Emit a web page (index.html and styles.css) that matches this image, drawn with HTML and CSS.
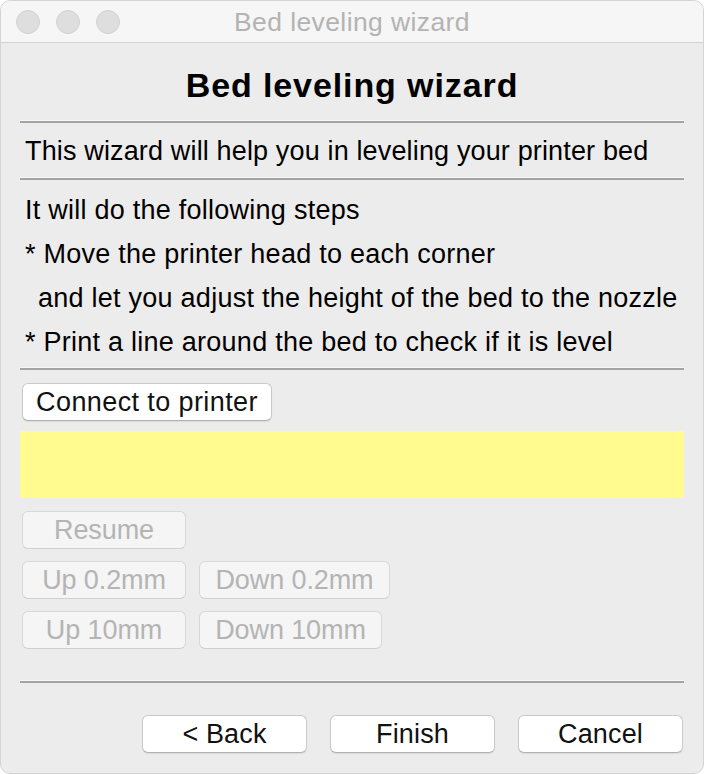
FILE: index.html
```html
<!DOCTYPE html>
<html>
<head>
<meta charset="utf-8">
<title>Bed leveling wizard</title>
<link rel="stylesheet" href="styles.css">
</head>
<body>
<div class="window">
  <div class="titlebar">
    <div class="lights">
      <span class="light"></span>
      <span class="light"></span>
      <span class="light"></span>
    </div>
    <div class="title">Bed leveling wizard</div>
  </div>
  <div class="content">
    <div class="heading">Bed leveling wizard</div>
    <div class="sep"></div>
    <div class="intro">This wizard will help you in leveling your printer bed</div>
    <div class="sep"></div>
    <div class="steps">
      <div class="line">It will do the following steps</div>
      <div class="line">* Move the printer head to each corner</div>
      <div class="line indent">and let you adjust the height of the bed to the nozzle</div>
      <div class="line">* Print a line around the bed to check if it is level</div>
    </div>
    <div class="sep"></div>
    <div class="controls">
      <button class="btn w-connect">Connect to printer</button>
      <div class="status"></div>
      <div class="row first"><button class="btn disabled w-small" disabled>Resume</button></div>
      <div class="row"><button class="btn disabled w-small" disabled>Up 0.2mm</button><button class="btn disabled w-down02" disabled>Down 0.2mm</button></div>
      <div class="row"><button class="btn disabled w-small" disabled>Up 10mm</button><button class="btn disabled w-down10" disabled>Down 10mm</button></div>
    </div>
    <div class="sep bottom-sep"></div>
    <div class="footer">
      <button class="btn w-footer">&lt; Back</button>
      <button class="btn w-footer">Finish</button>
      <button class="btn w-footer">Cancel</button>
    </div>
  </div>
</div>
</body>
</html>
```
FILE: styles.css
```css
* { box-sizing: border-box; }
html, body {
  margin: 0;
  padding: 0;
  background: #ffffff;
}
body {
  width: 704px;
  height: 774px;
  overflow: hidden;
  font-family: "Liberation Sans", Arial, sans-serif;
}
.window {
  width: 704px;
  height: 774px;
  background: #ececec;
  border-radius: 10px;
  border: 1px solid #d4d4d4;
  overflow: hidden;
  position: relative;
}
.titlebar {
  height: 42px;
  background: #f6f6f6;
  border-bottom: 1px solid #d2d2d2;
  display: flex;
  align-items: center;
  position: relative;
}
.lights {
  display: flex;
  gap: 16px;
  padding-left: 15px;
}
.light {
  width: 24px;
  height: 24px;
  border-radius: 50%;
  background: #dedede;
  border: 1px solid #d0d0d0;
  display: block;
}
.title {
  position: absolute;
  left: 0;
  right: 0;
  top: 0;
  line-height: 42px;
  text-align: center;
  font-size: 26.5px;
  letter-spacing: 0.4px;
  color: #b3b3b3;
}
.content {
  padding: 0 19px 0 19px;
}
.heading {
  padding-top: 7px;
  line-height: 71px;
  height: 78px;
  text-align: center;
  font-weight: bold;
  font-size: 34px;
  letter-spacing: 0.9px;
  color: #000;
}
.sep {
  height: 2px;
  background: #a4a4a4;
  box-shadow: 0 -1px 0 #f8f8f8;
}
.intro {
  padding-top: 2px;
  line-height: 53px;
  height: 55px;
  font-size: 27px;
  letter-spacing: 0.15px;
  padding-left: 5px;
  color: #000;
}
.steps {
  padding: 8px 0 4px 5px;
  font-size: 27px;
  letter-spacing: 0.25px;
  color: #000;
}
.line {
  line-height: 44px;
  height: 44px;
  white-space: nowrap;
}
.indent {
  padding-left: 13px;
}
.controls {
  padding: 13px 0 0 2px;
}
.btn {
  display: block;
  height: 38px;
  margin: 0;
  padding: 0;
  font-family: "Liberation Sans", Arial, sans-serif;
  font-size: 27px;
  letter-spacing: 0.15px;
  line-height: 36px;
  text-align: center;
  color: #111;
  background: #ffffff;
  border: 1px solid #c9c9c9;
  border-bottom-color: #b2b2b2;
  border-radius: 6px;
  box-shadow: 0 1px 1px rgba(0, 0, 0, 0.08);
}
.btn.disabled {
  background: #f5f5f5;
  color: #b4b4b4;
  border-color: #d8d8d8;
  border-bottom-color: #cfcfcf;
  box-shadow: none;
  letter-spacing: -0.1px;
}
.w-connect { width: 250px; letter-spacing: 0.4px; }
.w-small { width: 164px; }
.w-down02 { width: 191px; }
.w-down10 { width: 183px; }
.w-footer { width: 165px; }
.status {
  margin: 10px 0 0 -2px;
  height: 67px;
  background: #fffb8f;
}
.row {
  display: flex;
  gap: 13px;
  margin-top: 12px;
}
.row.first {
  margin-top: 13px;
}
.bottom-sep {
  margin-top: 32px;
}
.footer {
  display: flex;
  justify-content: flex-end;
  gap: 23px;
  margin-top: 32px;
  padding-right: 1px;
}
```
